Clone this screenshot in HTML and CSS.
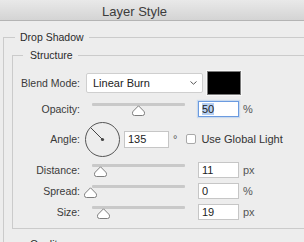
FILE: index.html
```html
<!DOCTYPE html>
<html lang="en">

<head>
  <link rel="stylesheet" href="styles.css">
</head>

<body>
  <div class="titlebar">Layer Style</div>

  <fieldset class="group">
    <legend>Drop Shadow</legend>

    <fieldset class="sub">
      <legend>Structure</legend>

      <div class="row row-blend">
        <span class="label">Blend Mode:</span>
        <div class="select">
          <span>Linear Burn</span>
          <svg class="chevron" width="7" height="4" viewBox="0 0 7 4"><path d="M0.5 0.5 L3.5 3.2 L6.5 0.5" fill="none" stroke="#555" stroke-width="1"/></svg>
        </div>
        <div class="swatch"></div>
      </div>

      <div class="row row-opacity">
        <span class="label">Opacity:</span>
        <div class="slider">
          <div class="track"></div>
          <svg class="thumb" style="left: 40px" width="13" height="11" viewBox="0 0 13 11"><path d="M6.5 0.8 L11.8 6.2 Q12.5 7 12.5 8 V8.5 Q12.5 10.5 10.5 10.5 H2.5 Q0.5 10.5 0.5 8.5 V8 Q0.5 7 1.2 6.2 Z"/></svg>
        </div>
        <div class="field focused"><span class="selected">50</span></div>
        <span class="unit">%</span>
      </div>

      <div class="row row-angle">
        <span class="label">Angle:</span>
        <svg class="dial" width="35" height="35" viewBox="0 0 35 35">
          <circle cx="17.5" cy="17.5" r="17" fill="none" stroke="#555" stroke-width="1"/>
          <line x1="5.5" y1="5.5" x2="17.5" y2="17.5" stroke="#444" stroke-width="1"/>
          <circle cx="17.5" cy="17.5" r="1.6" fill="#444"/>
        </svg>
        <div class="field field-angle">135</div>
        <span class="degree">°</span>
        <span class="checkbox"></span>
        <span class="check-label">Use Global Light</span>
      </div>

      <div class="row row-distance">
        <span class="label">Distance:</span>
        <div class="slider">
          <div class="track"></div>
          <svg class="thumb" style="left: 2px" width="13" height="11" viewBox="0 0 13 11"><path d="M6.5 0.8 L11.8 6.2 Q12.5 7 12.5 8 V8.5 Q12.5 10.5 10.5 10.5 H2.5 Q0.5 10.5 0.5 8.5 V8 Q0.5 7 1.2 6.2 Z"/></svg>
        </div>
        <div class="field">11</div>
        <span class="unit">px</span>
      </div>

      <div class="row row-spread">
        <span class="label">Spread:</span>
        <div class="slider">
          <div class="track"></div>
          <svg class="thumb" style="left: -8px" width="13" height="11" viewBox="0 0 13 11"><path d="M6.5 0.8 L11.8 6.2 Q12.5 7 12.5 8 V8.5 Q12.5 10.5 10.5 10.5 H2.5 Q0.5 10.5 0.5 8.5 V8 Q0.5 7 1.2 6.2 Z"/></svg>
        </div>
        <div class="field">0</div>
        <span class="unit">%</span>
      </div>

      <div class="row row-size">
        <span class="label">Size:</span>
        <div class="slider">
          <div class="track"></div>
          <svg class="thumb" style="left: 5px" width="13" height="11" viewBox="0 0 13 11"><path d="M6.5 0.8 L11.8 6.2 Q12.5 7 12.5 8 V8.5 Q12.5 10.5 10.5 10.5 H2.5 Q0.5 10.5 0.5 8.5 V8 Q0.5 7 1.2 6.2 Z"/></svg>
        </div>
        <div class="field">19</div>
        <span class="unit">px</span>
      </div>
    </fieldset>

    <fieldset class="sub quality">
      <legend>Quality</legend>
    </fieldset>
  </fieldset>
</body>

</html>
```

FILE: styles.css
```css
body {
  font-family: 'Liberation Sans', Arial, sans-serif;
  font-size: 10.5px;
  background-color: #ededed; /* panel gray */
  color: #3a3a3a;
  margin: 0;
  height: 242px;
  overflow: hidden;
}

.titlebar {
  height: 17px;
  padding: 3px 0 0 102px;
  line-height: 17px;
  font-size: 13px;
  color: #3c3c3c;
  background: linear-gradient(#e9e9e9, #d4d4d4);
  border-bottom: 1px solid #b4b4b4;
}

fieldset {
  margin: 0;
  padding: 0;
  min-width: 0;
  border: 1px solid #cbcbcb;
}

legend {
  line-height: 14px;
  color: #2a2a2a;
}

.group {
  width: 360px;
  margin: 9px 0 0 3px;
  padding: 0 0 0 8px;
}

.group > legend {
  margin-left: 3px;
  padding: 0 5px;
}

.sub {
  margin-top: 4px;
  padding: 8px 0 6px 0;
}

.sub > legend {
  margin-left: 10px;
  padding: 0 5px 0 7px;
}

.quality {
  margin-top: 8px;
  height: 40px;
}

.row {
  display: flex;
  align-items: center;
}

.row-blend { height: 26px; }
.row-opacity { height: 26px; }
.row-angle { height: 34px; }
.row-distance { height: 20px; margin-top: 4px; }
.row-spread { height: 21px; }
.row-size { height: 21px; }

.label {
  flex: none;
  width: 67px;
  margin-right: 6px;
  text-align: right;
}

.select {
  display: flex;
  align-items: center;
  justify-content: space-between;
  width: 104px;
  height: 18px;
  padding: 0 5px 0 6px;
  font-size: 11px;
  color: #222;
  background-color: #fff;
  border: 1px solid #cfcfcf;
  border-radius: 2px;
}

.swatch {
  width: 32px;
  height: 22px;
  margin-left: 4px;
  background-color: #000;
  border: 1px solid #7a7a7a;
  box-shadow: 0 0 0 1px #f8f8f8;
}

.slider {
  position: relative;
  flex: none;
  width: 93px;
  height: 12px;
  margin-left: 6px;
}

.track {
  height: 3px;
  background-color: #c9c9c9;
  border-radius: 1px;
}

.thumb {
  position: absolute;
  top: 2px;
  fill: #fff;
  stroke: #7d7d7d;
  stroke-width: 1;
}

.field {
  flex: none;
  box-sizing: border-box;
  width: 41px;
  height: 16px;
  margin-left: 13px;
  padding-left: 3px;
  font-size: 11px;
  line-height: 14px;
  color: #222;
  background-color: #fff;
  border: 1px solid #c6c6c6;
}

.field.focused {
  border-color: #6b9be0; /* blue focus ring */
  box-shadow: 0 0 1px 1px rgba(150, 190, 240, 0.4);
}

.selected {
  background-color: #b5cff2; /* text highlight */
}

.unit {
  margin-left: 4px;
  color: #555;
  font-size: 11px;
}

.dial {
  flex: none;
  margin-left: -1px;
}

.field-angle {
  width: 45px;
  height: 17px;
  margin-left: 4px;
}

.degree {
  margin-left: 4px;
  font-size: 11px;
  color: #555;
}

.checkbox {
  flex: none;
  box-sizing: border-box;
  width: 10px;
  height: 10px;
  margin-left: 9px;
  background-color: #fff;
  border: 1px solid #a9a9a9;
  border-radius: 2px;
}

.check-label {
  margin-left: 5px;
  font-size: 11px;
  color: #333;
}
```
